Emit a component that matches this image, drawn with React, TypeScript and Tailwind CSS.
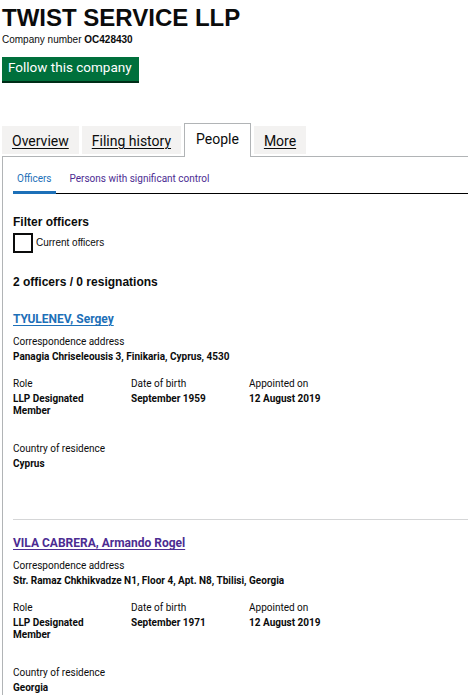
import React from "react";

const arial = "font-['Liberation_Sans',Arial,sans-serif]";
const hum = "font-[Roboto,'Noto_Sans',sans-serif]";

type Officer = {
  name: string;
  visited: boolean;
  address: string;
  role: string;
  dob: string;
  appointed: string;
  country: string;
};

const officers: Officer[] = [
  {
    name: "TYULENEV, Sergey",
    visited: false,
    address: "Panagia Chriseleousis 3, Finikaria, Cyprus, 4530",
    role: "LLP Designated Member",
    dob: "September 1959",
    appointed: "12 August 2019",
    country: "Cyprus",
  },
  {
    name: "VILA CABRERA, Armando Rogel",
    visited: true,
    address: "Str. Ramaz Chkhikvadze N1, Floor 4, Apt. N8, Tbilisi, Georgia",
    role: "LLP Designated Member",
    dob: "September 1971",
    appointed: "12 August 2019",
    country: "Georgia",
  },
];

function OfficerBlock({ o }: { o: Officer }) {
  return (
    <div className={hum}>
      <h2 className="text-[12px] leading-[14px] font-bold">
        <a
          href="#"
          className={
            "underline underline-offset-[2px] decoration-1 " +
            (o.visited ? "text-[#4c2c92]" : "text-[#1d70b8]")
          }
        >
          {o.name}
        </a>
      </h2>
      <div className="mt-[10px] text-[10px] leading-[12px]">Correspondence address</div>
      <div className="mt-[3px] text-[10px] leading-[12px] font-bold">{o.address}</div>
      <div className="mt-[15px] grid grid-cols-[118px_118px_118px] text-[10px] leading-[12px]">
        <div className="pr-[16px]">
          <div>Role</div>
          <div className="mt-[3px] font-bold">{o.role}</div>
        </div>
        <div className="pr-[16px]">
          <div>Date of birth</div>
          <div className="mt-[3px] font-bold">{o.dob}</div>
        </div>
        <div className="pr-[16px]">
          <div>Appointed on</div>
          <div className="mt-[3px] font-bold">{o.appointed}</div>
        </div>
      </div>
      <div className="mt-[26px] text-[10px] leading-[12px]">Country of residence</div>
      <div className="mt-[3px] text-[10px] leading-[12px] font-bold">{o.country}</div>
    </div>
  );
}

export default function App() {
  return (
    <div className="w-full overflow-hidden bg-white pl-[2px] text-[#0b0c0c]">
      <h1 className={arial + " mt-[6px] text-[24px] leading-[24px] font-bold"}>TWIST SERVICE LLP</h1>
      <p className={arial + " mt-[4px] text-[10px] leading-[12px]"}>
        Company number <strong className="font-bold">OC428430</strong>
      </p>
      <div className="mt-[11px] flex">
        <a
          href="#"
          className={
            hum +
            " h-[24px] bg-[#00703c] pl-[6px] pr-[7px] pt-[2px] text-[13.5px] leading-[16px] text-white shadow-[0_2px_0_#002d18]"
          }
        >
          Follow this company
        </a>
      </div>

      <ul className={hum + " mt-[42px] flex items-end gap-[3px] text-[14px] leading-[18px]"}>
        <li className="mb-[2px] h-[28px] bg-[#f3f2f1] px-[10px] pt-[6px]">
          <a href="#" className="underline underline-offset-[2px] decoration-1">Overview</a>
        </li>
        <li className="mb-[2px] h-[28px] bg-[#f3f2f1] px-[10px] pt-[6px]">
          <a href="#" className="underline underline-offset-[2px] decoration-1">Filing history</a>
        </li>
        <li className="relative z-10 mb-[-1px] h-[34px] border border-b-0 border-[#b1b4b6] bg-white px-[11px] pt-[6px]">
          People
        </li>
        <li className="mb-[2px] h-[28px] bg-[#f3f2f1] px-[10px] pt-[6px]">
          <a href="#" className="underline underline-offset-[2px] decoration-1">More</a>
        </li>
      </ul>

      <div className="border-l border-t border-[#b1b4b6] pl-[10px] pt-[16px] pb-[40px]">
        <ul className={hum + " flex border-b border-black text-[10px] leading-[12px]"}>
          <li className="mb-[-1px] border-b-[3px] border-[#1d70b8] px-[4px] pb-[6px] text-[#1d70b8]">Officers</li>
          <li className="ml-[10px] px-[4px] text-[#4c2c92]">Persons with significant control</li>
        </ul>

        <h2 className={arial + " mt-[21px] text-[12px] leading-[14px] font-bold"}>Filter officers</h2>
        <div className={arial + " mt-[4px] flex items-center gap-[3px]"}>
          <span className="block h-[20px] w-[20px] border-2 border-[#0b0c0c] bg-white" />
          <span className="text-[10px] leading-[12px]">Current officers</span>
        </div>

        <h2 className={arial + " mt-[22px] text-[12px] leading-[14px] font-bold"}>2 officers / 0 resignations</h2>

        <div className="mt-[23px]">
          <OfficerBlock o={officers[0]} />
        </div>
        <div className="mt-[49px] h-px bg-[#d5d6d7]" />
        <div className="mt-[16px]">
          <OfficerBlock o={officers[1]} />
        </div>
      </div>
    </div>
  );
}
